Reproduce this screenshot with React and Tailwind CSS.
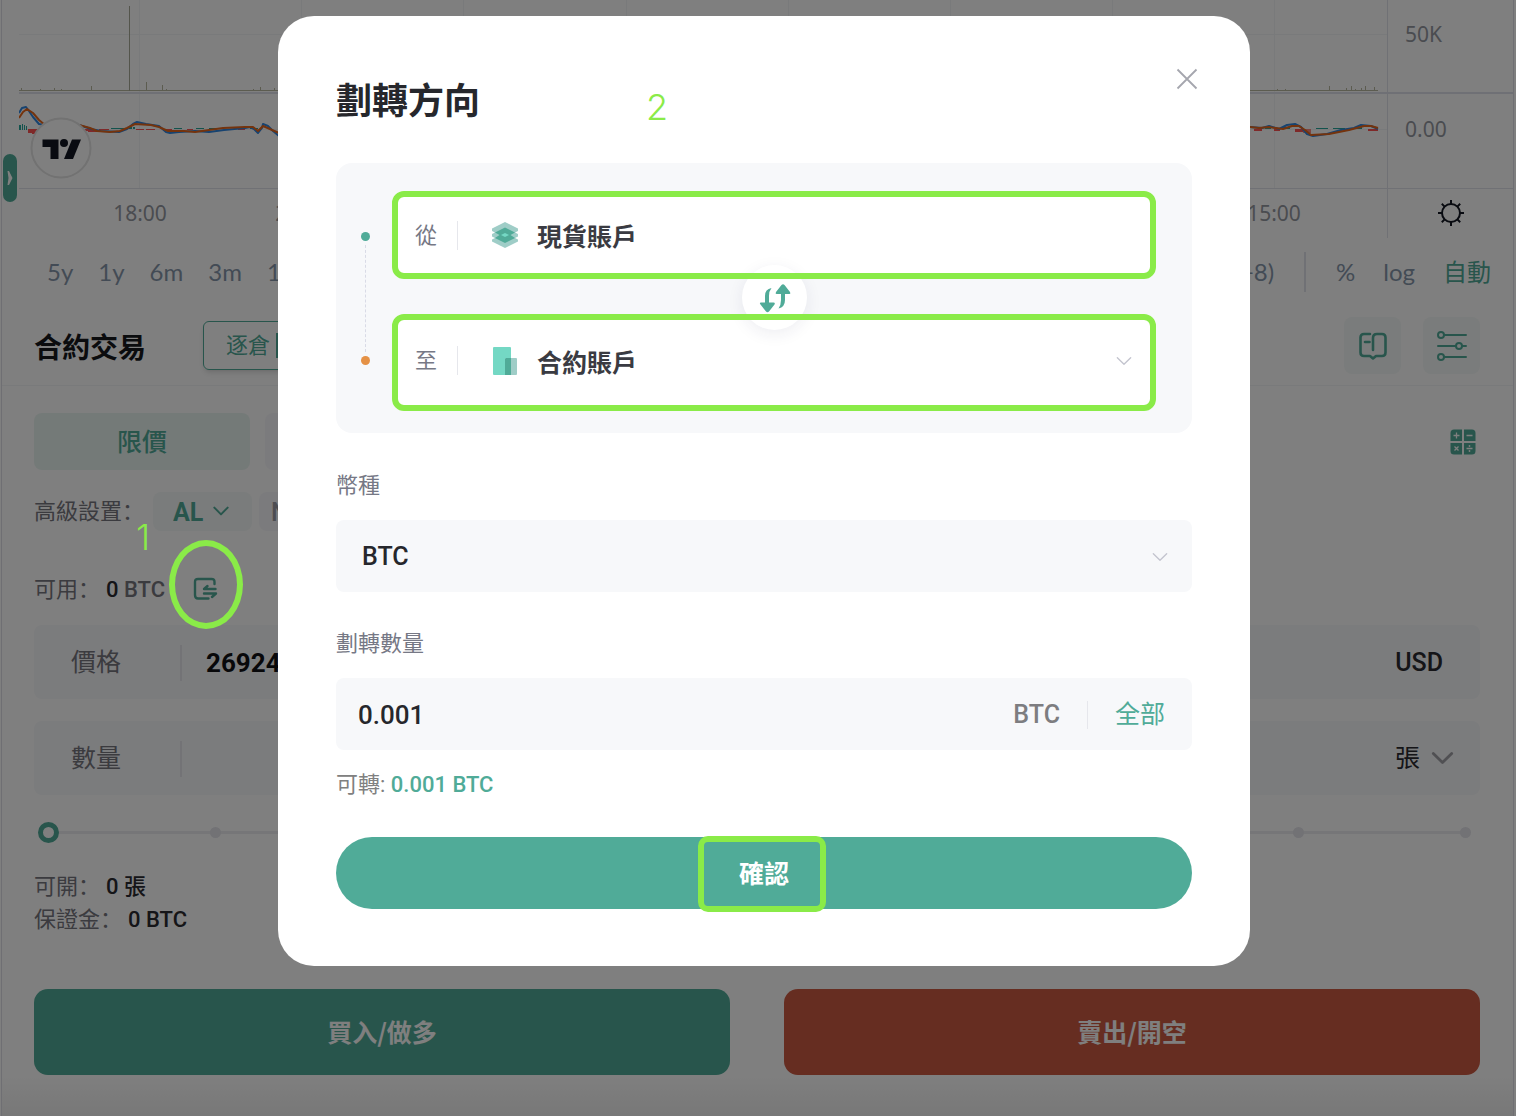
import React from 'react';

const timeLabels = ['18:00', '21:00', '10', '03:00', '06:00', '09:00', '12:00', '15:00'];
const ranges = ['5y', '1y', '6m', '3m', '1m', '5d', '1d'];
const gridLines = [120, 282, 444, 607, 769, 931, 1093, 1255];

// [x, height] of the taller volume bars
const volumeBars = [
  [2, 3], [21, 2], [35, 3], [42, 2], [72, 5], [127, 9], [143, 6], [147, 2], [234, 2], [241, 4], [255, 3],
  [1258, 2], [1266, 2], [1310, 5], [1327, 3], [1332, 5], [1336, 2], [1342, 3], [1346, 5], [1355, 4]
];

// [x, y, width, height, colour] of the histogram bars
const histogram = [
  [0, 125, 2, 5, '#26a69a'], [3, 124, 1, 6, '#26a69a'], [5, 125, 1, 5, '#26a69a'], [7, 126, 1, 4, '#26a69a'],
  [9, 129, 10, 4, '#ff5252'], [13, 131, 4, 3, '#ff5252'],
  [64, 129, 8, 2, '#ff5252'], [69, 130, 10, 2, '#ff5252'], [80, 129, 10, 1, '#ff5252'], [92, 128, 14, 1, '#26a69a'],
  [110, 127, 3, 2, '#26a69a'], [114, 127, 2, 2, '#26a69a'], [117, 129, 8, 1, '#ff5252'], [127, 129, 9, 1, '#ff5252'],
  [145, 129, 8, 2, '#ff5252'], [155, 128, 8, 1, '#26a69a'], [168, 129, 6, 1, '#ff5252'], [177, 128, 8, 1, '#26a69a'],
  [190, 128, 12, 1, '#26a69a'], [207, 129, 8, 1, '#ff5252'], [219, 129, 7, 1, '#ff5252'], [231, 128, 8, 1, '#26a69a'],
  [1235, 129, 8, 2, '#ff5252'], [1246, 128, 6, 1, '#26a69a'], [1255, 129, 6, 2, '#ff5252'], [1263, 127, 8, 2, '#26a69a'],
  [1276, 129, 8, 3, '#ff5252'], [1284, 129, 8, 4, '#ff8a80'], [1297, 128, 12, 1, '#26a69a'], [1314, 128, 12, 1, '#26a69a'],
  [1335, 127, 8, 2, '#26a69a'], [1349, 129, 10, 2, '#ff5252']
];

const Chevron = ({ className, strokeWidth = 2 }) => (
  <svg viewBox="0 0 20 12" fill="none" stroke="currentColor" strokeWidth={strokeWidth} className={className} aria-hidden="true">
    <path d="M2 2 L10 10 L18 2" strokeLinecap="round" strokeLinejoin="round" />
  </svg>
);

const TradingViewLogo = () => (
  <svg viewBox="0 0 62 62" className="absolute left-7 top-[117px] size-[62px]" aria-hidden="true">
    <circle cx="31" cy="31" r="29.5" fill="#fff" stroke="#e4e4e4" strokeWidth="2" />
    <path fill="#131722" d="M12.500 22.500H28.500V42H20.500V30H12.500Z" />
    <circle cx="34" cy="26" r="4" fill="#131722" />
    <path fill="#131722" d="M42 22.500H51L43 42H34Z" />
  </svg>
);

const ChartPlot = () => (
  <svg viewBox="0 0 1368 188" preserveAspectRatio="none" className="h-[188px] w-full" aria-hidden="true">
    {gridLines.map((x) => (
      <path key={x} d={`M${x + 0.5} 0V188`} stroke="#f3f4f6" />
    ))}
    <path d="M0 34.500H1368M0 129.500H1368" stroke="#f3f4f6" />
    <path d="M0 90.500H260M1230 90.500H1359" stroke="#b9b9a0" />
    <path d="M110.500 6V91" stroke="#a9aa98" />
    {volumeBars.map(([x, h]) => (
      <rect key={x} x={x} y={91 - h} width="1" height={h} fill="#b9b9a0" />
    ))}
    {histogram.map(([x, y, w, h, fill]) => (
      <rect key={x} x={x} y={y} width={w} height={h} fill={fill} />
    ))}
    <g fill="none" strokeWidth="2" strokeLinejoin="round">
      <path
        stroke="#2f86e0"
        d="M0 113L3 108L7 107L10 111L14 117L20 124L26 125M60 125L72 129L82 131L100 132L108 129L114 124L118 122L127 124L140 126L147 132L151 133L160 132L176 131L190 132L205 130L226 128L231 127L235 129L239 133L243 128L244 124L249 126L254 131L260 136M1231 127L1243 128L1250 126L1260 129L1268 125L1276 124L1282 127L1288 134L1294 136L1308 134L1322 130L1335 128L1342 125L1352 126L1359 129"
      />
      <path
        stroke="#e8661a"
        d="M0 118L4 112L8 109L14 113L20 120L26 125M60 125L71 128L78 131L91 132L101 131L108 128L116 124L132 125L140 127L149 131L165 131L176 132L190 130L204 128L226 127L234 127L239 131L244 126L260 133M1231 127L1240 128L1250 127L1264 129L1273 126L1280 126L1286 130L1292 135L1310 134L1330 130L1345 126L1352 126L1359 128"
      />
    </g>
  </svg>
);

const SunIcon = () => (
  <svg viewBox="0 0 28 28" className="size-7" fill="none" stroke="#131722" strokeWidth="2" aria-hidden="true">
    <circle cx="14" cy="14" r="9" />
    <path d="M14 1v4M14 23v4M1 14h4M23 14h4M4.800 4.800l2.800 2.800M20.400 20.400l2.800 2.800M4.800 23.200l2.800-2.800M20.400 7.600l2.800-2.800" />
  </svg>
);

const ChartPanel = () => (
  <section className="font-['Noto_Sans','Noto_Sans_CJK_SC',sans-serif] text-[#9598a1]">
    <div className="relative grid grid-cols-[1fr_125px]">
      <div className="border-r border-[#e0e3eb] pl-[17px]">
        <ChartPlot />
      </div>
      <div className="flex flex-col pl-[17px] text-[21px] leading-[30px]">
        <span className="mt-[19px]">50K</span>
        <span className="mt-[65px]">0.00</span>
      </div>
      <div className="absolute inset-x-0 left-[17px] top-[92px] h-0.5 bg-[#dfe0ea]" />
      <TradingViewLogo />
    </div>
    <div className="grid h-[50px] grid-cols-[1fr_125px]">
      <div className="border-r border-[#e0e3eb] pl-[17px]">
        <div className="grid grid-cols-8 border-t border-[#e0e3eb] pl-10 pr-8 text-center text-[21px] leading-[49px]">
          {timeLabels.map((label) => (
            <span key={label}>{label}</span>
          ))}
        </div>
      </div>
      <div className="flex items-center justify-center border-t border-[#e0e3eb] pb-0.5">
        <button type="button" aria-label="圖表設置">
          <SunIcon />
        </button>
      </div>
    </div>
    <div className="flex h-[68px] items-center justify-between pl-[45px] pr-[22px] font-['Lato','Noto_Sans_CJK_SC',sans-serif] text-2xl text-[#8797ab]">
      <div className="flex gap-[25px]">
        {ranges.map((range) => (
          <button key={range} type="button">{range}</button>
        ))}
      </div>
      <div className="flex items-center">
        <span>(UTC+8)</span>
        <span className="ml-[30px] h-10 w-0.5 bg-[#e0e3eb]" />
        <button type="button" className="ml-[30px]">%</button>
        <button type="button" className="ml-7">log</button>
        <button type="button" className="ml-7 text-[#50ab98]">自動</button>
      </div>
    </div>
  </section>
);

const BookIcon = () => (
  <svg viewBox="0 0 28 28" className="size-7" fill="none" stroke="#50ab98" strokeWidth="2.600" strokeLinecap="round" strokeLinejoin="round" aria-hidden="true">
    <path d="M11 2H5Q1.500 2 1.500 5.500V20.500Q1.500 24 5 24H11L14 26.500L17 24H23Q26.500 24 26.500 20.500V5.500Q26.500 2 23 2H18Q14 2 14 6V18" />
    <path d="M6 10H10.500" />
  </svg>
);

const SlidersIcon = () => (
  <svg viewBox="0 0 32 32" className="size-8" fill="none" stroke="#50ab98" strokeWidth="2" strokeLinecap="round" aria-hidden="true">
    <circle cx="5" cy="5" r="3" />
    <path d="M8 5H30M2 16H20M26 16H30M8 27H30" />
    <circle cx="23" cy="16" r="3" />
    <circle cx="5" cy="27" r="3" />
  </svg>
);

const CalculatorIcon = () => (
  <svg viewBox="0 0 26 26" className="size-[26px]" aria-hidden="true">
    <path fill="#50ab98" d="M4 0.500H12V12H0.500V4Q0.500 0.500 4 0.500ZM14 0.500H22Q25.500 0.500 25.500 4V12H14ZM0.500 14H12V25.500H4Q0.500 25.500 0.500 22ZM14 14H25.500V22Q25.500 25.500 22 25.500H14Z" />
    <path stroke="#fff" strokeWidth="1.300" d="M3.500 6.500H9.500M6.500 3.500V9.500M16.500 6.500H22.500M4.500 17.500L8.500 21.500M8.500 17.500L4.500 21.500M16.500 19.500H22.500" />
    <circle cx="19.500" cy="17" r="0.900" fill="#fff" />
    <circle cx="19.500" cy="22" r="0.900" fill="#fff" />
  </svg>
);

const TransferIcon = () => (
  <svg viewBox="0 0 26 24" className="h-6 w-[26px]" fill="none" stroke="#50ab98" strokeWidth="2.400" strokeLinecap="round" strokeLinejoin="round" aria-hidden="true">
    <path d="M21.500 7V5Q21.500 2 18.500 2H5Q2 2 2 5V18Q2 21.500 5 21.500H15.500" />
    <path d="M22.500 12H11L14.500 9M11 16.500H23L19 20" />
  </svg>
);

const AmountSlider = ({ label }) => (
  <div className="relative mx-1 h-[22px]">
    <div className="absolute inset-x-[9px] top-[10px] h-[3px] bg-[#ececf0]" />
    <div className="absolute inset-x-[5px] top-[6px] flex justify-between">
      {[0, 25, 50, 75, 100].map((stop) => (
        <span key={stop} className="size-[11px] rounded-full bg-[#e4e4ea]" />
      ))}
    </div>
    <input
      type="range"
      aria-label={label}
      defaultValue={0}
      className="absolute inset-0 h-[22px] w-full appearance-none bg-transparent [&::-webkit-slider-thumb]:size-[21px] [&::-webkit-slider-thumb]:appearance-none [&::-webkit-slider-thumb]:rounded-full [&::-webkit-slider-thumb]:border-[5px] [&::-webkit-slider-thumb]:border-[#50ab98] [&::-webkit-slider-thumb]:bg-white"
    />
  </div>
);

const OrderForm = () => (
  <section>
    <div className="flex h-20 items-center border-b border-[#f3f4f6] pl-8 pr-[33px]">
      <h1 className="font-['Noto_Sans_CJK_SC',sans-serif] text-[28px] font-bold text-[#17181c]">合約交易</h1>
      <button type="button" className="ml-[57px] flex h-[49px] items-center gap-[6px] rounded-md border border-[#50ab98] px-[22px] text-[22px] text-[#50ab98] shadow-md">
        逐倉
        <span className="h-[25px] w-12 bg-[#50ab98]" />
      </button>
      <div className="ml-auto flex gap-[22px]">
        <button type="button" aria-label="教學" className="flex size-[57px] items-center justify-center rounded-lg bg-[#f5f9f8]">
          <BookIcon />
        </button>
        <button type="button" aria-label="偏好設置" className="flex size-[57px] items-center justify-center rounded-lg bg-[#f5f9f8]">
          <SlidersIcon />
        </button>
      </div>
    </div>

    <div className="pl-8 pr-[33px] pt-[27px]">
      <div className="flex items-center gap-[15px]">
        <button type="button" className="h-[57px] w-[216px] rounded-lg bg-[#e9f4f1] pt-0.5 text-[25px] font-medium text-[#50ab98]">限價</button>
        <button type="button" aria-label="市價" className="h-[57px] w-[216px] rounded-lg bg-[#f7f7fa]" />
        <button type="button" aria-label="計算器" className="ml-auto mr-1">
          <CalculatorIcon />
        </button>
      </div>

      <div className="mt-[22px] flex h-[39px] items-center text-[22px] text-[#76767e]">
        <label htmlFor="advanced">高級設置：</label>
        <div className="relative ml-[9px] h-[39px] w-[99px] rounded-lg bg-[#f5f9f8] text-[#50ab98]">
          <select id="advanced" className="h-full w-full appearance-none pl-5 pt-0.5 text-[25px] font-bold">
            <option>AL</option>
          </select>
          <Chevron className="pointer-events-none absolute right-[22px] top-[14px] h-[10px] w-[18px]" strokeWidth={2.4} />
        </div>
        <button type="button" className="ml-[7px] h-[39px] rounded-lg bg-[#f7f7fa] px-3 pt-0.5 text-[25px] font-medium text-[#9a9aa4]">N</button>
      </div>

      <div className="mt-[43px] flex h-[30px] items-center text-[22px] text-[#76767e]">
        <span>可用：</span>
        <span className="ml-[6px] font-medium"><span className="text-[#2a2a30]">0</span> BTC</span>
        <button type="button" aria-label="劃轉" className="ml-7">
          <TransferIcon />
        </button>
      </div>

      <div className="mt-[21px] flex h-[74px] items-center rounded-lg bg-[#f7f8fa] pr-[37px] pt-0.5 text-[25px]">
        <label htmlFor="price" className="w-[146px] shrink-0 pl-[37px] text-[#76767e]">價格</label>
        <span className="h-9 w-0.5 bg-[#e6e7ec]" />
        <input id="price" defaultValue="26924" className="ml-6 min-w-0 flex-1 text-[26px] font-bold text-[#111114]" />
        <span className="font-medium text-[#2a2a30]">USD</span>
      </div>

      <div className="mt-[22px] flex h-[74px] items-center rounded-lg bg-[#f7f8fa] pr-[26px] pt-0.5 text-[25px]">
        <label htmlFor="quantity" className="w-[146px] shrink-0 pl-[37px] text-[#76767e]">數量</label>
        <span className="h-9 w-0.5 bg-[#e6e7ec]" />
        <input id="quantity" className="ml-6 min-w-0 flex-1 text-[26px] font-bold text-[#111114]" />
        <div className="relative w-[59px] text-[#2a2a30]">
          <select aria-label="數量單位" className="w-full appearance-none">
            <option>張</option>
          </select>
          <Chevron className="pointer-events-none absolute right-0 top-[11px] h-[14px] w-[23px] text-[#a0a0a6]" strokeWidth={2.4} />
        </div>
      </div>

      <div className="mt-[26px] grid grid-cols-2 gap-[54px]">
        <AmountSlider label="買入比例" />
        <AmountSlider label="賣出比例" />
      </div>

      <dl className="mt-[27px] text-[22px] leading-[33px] text-[#76767e]">
        <div className="flex gap-[6px]">
          <dt>可開：</dt>
          <dd className="font-medium text-[#2a2a30]">0 張</dd>
        </div>
        <div className="flex gap-[6px]">
          <dt>保證金：</dt>
          <dd className="font-medium text-[#2a2a30]">0 BTC</dd>
        </div>
      </dl>

      <div className="mt-[53px] grid grid-cols-2 gap-[54px] font-['Noto_Sans_CJK_SC',sans-serif] text-[25px] font-bold text-white">
        <button type="button" className="h-[86px] rounded-[14px] bg-[#50ab98]">買入/做多</button>
        <button type="button" className="h-[86px] rounded-[14px] bg-[#cc5a42]">賣出/開空</button>
      </div>
    </div>
  </section>
);

const SpotIcon = () => (
  <svg viewBox="0 0 28 28" className="size-7" aria-hidden="true">
    <path fill="#9fcdc7" d="M14 1L27 7.500V10L24 11.500L27 13V15.500L24 17L27 18.500V20.500L14 27L1 20.500V18.500L4 17L1 15.500V13L4 11.500L1 10V7.500Z" />
    <path fill="#50ab98" d="M14 6.500L24 11.500L19.500 14L24 17L14 22L4 17L8.500 14L4 11.500Z" />
    <path fill="#74d8c4" d="M14 12L18 14L14 16L10 14Z" />
  </svg>
);

const ContractIcon = () => (
  <svg viewBox="0 0 28 28" className="size-7" aria-hidden="true">
    <rect x="2" y="0" width="18" height="28" rx="1" fill="#74d8c4" />
    <rect x="14" y="11" width="12" height="17" rx="1" fill="#9fcdc7" />
    <path fill="#50ab98" d="M15 11H20V28H14V12Z" />
  </svg>
);

const SwapIcon = () => (
  <svg viewBox="0 0 32 30" className="h-[30px] w-8" fill="#50ab98" aria-hidden="true">
    <path d="M12.500 5Q6 6 6 13V19.500H2Q0 19.500 1.500 21.500L7 28.500Q8.500 30 10 28.500L15.500 21.500Q16.500 19.500 14.500 19.500H10V13Q10 8 12.500 5Z" />
    <path d="M19.500 25.500Q26 24 26 17V11H30.500Q32 11 31 9L25.500 2Q24 0.500 22.500 2L17 9Q16 11 17.500 11H22V17Q22 22 19.500 25.500Z" />
  </svg>
);

const Highlight = ({ className }) => (
  <span className={`pointer-events-none absolute z-20 border-[6px] border-[#8aeb48] ${className}`} />
);

const TransferModal = () => (
  <div role="dialog" aria-labelledby="transfer-title" className="relative w-full max-w-[972px] rounded-[36px] bg-white px-[58px] pb-[57px] pt-16">
    <h2 id="transfer-title" className="text-4xl font-bold leading-[44px] text-[#26272c]">劃轉方向</h2>
    <span className="absolute left-[368px] top-[73px] font-['Inter',sans-serif] text-4xl font-light leading-9 text-[#8aeb48]">2</span>
    <button type="button" aria-label="關閉" className="absolute right-[52px] top-[52px]">
      <svg viewBox="0 0 22 22" className="size-[22px]" stroke="#a5a6ae" strokeWidth="1.800" aria-hidden="true">
        <path d="M1.500 1.500L20.500 20.500M20.500 1.500L1.500 20.500" />
      </svg>
    </button>

    <div className="relative mt-[39px] flex rounded-2xl bg-[#f7f8fa] pb-[22px] pr-9 pt-7">
      <div className="flex w-14 flex-col items-center pb-[46px] pl-0.5 pt-[41px]">
        <span className="size-[9px] rounded-full bg-[#50ab98]" />
        <span className="my-1 flex-1 border-l border-dashed border-[#d9dbe6]" />
        <span className="size-[9px] rounded-full bg-[#e59145]" />
      </div>
      <div className="flex-1">
        <div className="relative flex h-[88px] items-center rounded-xl bg-white pl-[23px]">
          <span className="w-[42px] text-[22px] text-[#767885]">從</span>
          <span className="h-[29px] w-px bg-[#e6e7ec]" />
          <span className="ml-[33px]"><SpotIcon /></span>
          <span className="ml-[18px] font-['Noto_Sans_CJK_SC',sans-serif] text-[25px] font-bold leading-8 text-[#3a3b42]">現貨賬戶</span>
          <Highlight className="inset-0 rounded-xl" />
        </div>
        <div className="relative mt-[35px] flex h-[97px] items-center rounded-xl bg-white pb-1 pl-[23px]">
          <label htmlFor="target" className="w-[42px] text-[22px] text-[#767885]">至</label>
          <span className="h-[29px] w-px bg-[#e6e7ec]" />
          <span className="ml-[33px]"><ContractIcon /></span>
          <select id="target" className="ml-[18px] flex-1 appearance-none font-['Noto_Sans_CJK_SC',sans-serif] text-[25px] font-bold leading-8 text-[#3a3b42]">
            <option>合約賬戶</option>
          </select>
          <Chevron className="pointer-events-none absolute right-[23px] h-[10px] w-[18px] text-[#c3c4ce]" strokeWidth={1.6} />
          <Highlight className="inset-0 rounded-xl" />
        </div>
      </div>
      <button type="button" aria-label="互換" className="absolute left-[406px] top-[102px] z-10 flex size-[65px] items-center justify-center rounded-full bg-white shadow-[0_4px_16px_rgba(40,40,90,0.08)]">
        <SwapIcon />
      </button>
    </div>

    <label htmlFor="coin" className="mb-5 mt-[38px] block text-[22px] leading-[29px] text-[#767885]">幣種</label>
    <div className="relative flex h-[72px] items-center rounded-lg bg-[#f7f8fa] pt-0.5">
      <select id="coin" className="h-full w-full appearance-none pl-[26px] text-[25px] font-medium text-[#26272c]">
        <option>BTC</option>
      </select>
      <Chevron className="pointer-events-none absolute right-[23px] h-[10px] w-[18px] text-[#c3c4ce]" strokeWidth={1.6} />
    </div>

    <label htmlFor="amount" className="mb-5 mt-[37px] block text-[22px] leading-[29px] text-[#767885]">劃轉數量</label>
    <div className="flex h-[72px] items-center rounded-lg bg-[#f7f8fa] pl-[22px] pr-[27px] pt-0.5 text-[25px]">
      <input id="amount" defaultValue="0.001" className="min-w-0 flex-1 text-[26px] font-medium text-[#26272c]" />
      <span className="font-medium text-[#7d7d80]">BTC</span>
      <span className="mx-[27px] h-7 w-px bg-[#e6e7ec]" />
      <button type="button" className="text-[#50ab98]">全部</button>
    </div>

    <p className="mt-5 text-[22px] leading-[29px] text-[#808080]">
      可轉: <span className="font-medium text-[#50ab98]">0.001 BTC</span>
    </p>

    <button type="button" className="relative mt-[38px] flex h-[72px] w-full items-center justify-center rounded-full bg-[#50ab98] font-['Noto_Sans_CJK_SC',sans-serif] text-[25px] font-bold text-white">
      確認
      <Highlight className="-top-px left-1/2 h-[76px] w-32 -translate-x-[66px] rounded-[10px]" />
    </button>
  </div>
);

const App = () => {
  return (
    <div className="relative flex min-h-screen flex-col bg-white font-['Roboto','Noto_Sans_CJK_SC',sans-serif]">
      <main className="ml-px mr-0.5 flex flex-1 flex-col border-x border-[#dfdfe6]">
        <ChartPanel />
        <OrderForm />
        <div className="min-h-[41px] flex-1 bg-gradient-to-b from-white to-[#f0f0f0]" />
      </main>
      <button type="button" aria-label="展開" className="absolute left-[3px] top-[154px] flex h-12 w-[14px] items-center justify-center rounded-full bg-[#50ab98]">
        <svg viewBox="0 0 6 14" className="h-[14px] w-[6px]" fill="#fff" aria-hidden="true">
          <path d="M0.500 0H2L5.500 7L2 14H0.500L1.500 7Z" />
        </svg>
      </button>

      <div className="absolute inset-0 bg-black/50" />
      <div className="absolute inset-x-0 top-4 flex justify-center pl-3">
        <TransferModal />
      </div>

      <span className="absolute left-[136px] top-[519px] font-['Inter',sans-serif] text-4xl font-light leading-9 text-[#8aeb48]">1</span>
      <Highlight className="left-[169px] top-[540px] h-[89px] w-[74px] rounded-[50%]" />
    </div>
  );
};

export default App;
